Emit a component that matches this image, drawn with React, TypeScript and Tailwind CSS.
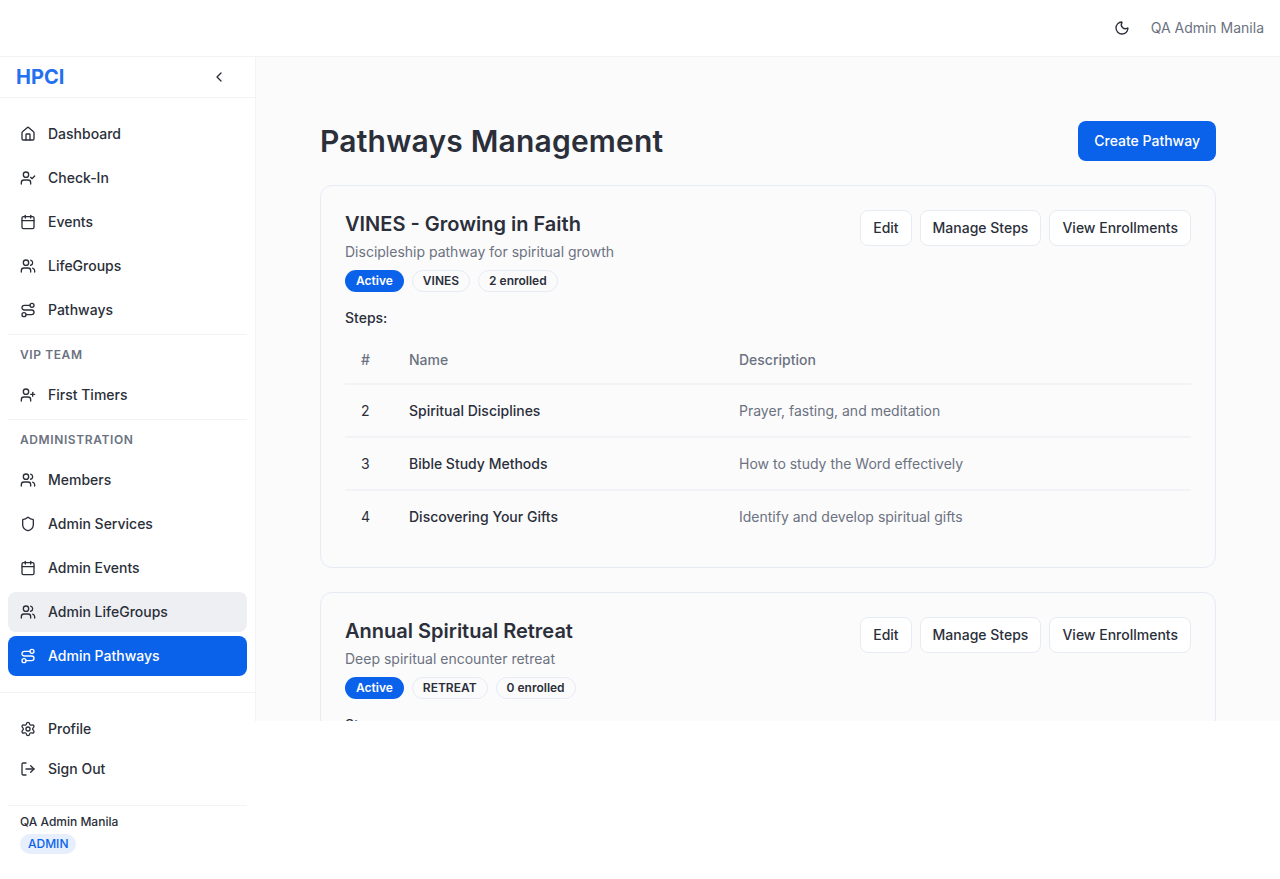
import React from 'react';
import { House, UserCheck, Calendar, Users, Route, UserPlus, Shield, Settings, LogOut, Moon, ChevronLeft } from 'lucide-react';

const font = { fontFamily: 'Inter, sans-serif' };

interface NavItemProps {
    icon: React.ElementType;
    label: string;
    state?: 'hover' | 'active';
}

const NavItem: React.FC<NavItemProps> = ({ icon: Icon, label, state }) => {
    let color = 'text-[#2b2f3a]';
    if (state === 'hover') color = 'bg-[#eeeff3] text-[#2b2f3a]';
    if (state === 'active') color = 'bg-[#0b62ea] text-white';
    return (
        <a className={`flex h-10 items-center gap-3 rounded-lg px-3 text-sm font-medium ${color}`}>
            <Icon className="h-4 w-4 shrink-0" strokeWidth={2} />
            <span>{label}</span>
        </a>
    );
};

const SectionLabel = ({ children }: { children: React.ReactNode }) => (
    <div className="flex h-[41px] items-center border-t border-[#f1f3f7] px-3 text-xs font-semibold tracking-wider text-[#6b7280]">
        {children}
    </div>
);

const OutlineButton = ({ children }: { children: React.ReactNode }) => (
    <button className="flex h-9 items-center rounded-lg border border-[#e6ebf4] bg-white px-3 text-sm font-medium text-[#2b2f3a]">
        {children}
    </button>
);

const Badge = ({ children, solid }: { children: React.ReactNode; solid?: boolean }) => (
    <span
        className={`flex h-[22px] items-center rounded-full border px-[10px] text-xs font-semibold ${
            solid ? 'border-transparent bg-[#0b62ea] text-white' : 'border-[#e6ebf4] text-[#2b2f3a]'
        }`}
    >
        {children}
    </span>
);

const steps = [
    { n: 2, name: 'Spiritual Disciplines', description: 'Prayer, fasting, and meditation' },
    { n: 3, name: 'Bible Study Methods', description: 'How to study the Word effectively' },
    { n: 4, name: 'Discovering Your Gifts', description: 'Identify and develop spiritual gifts' },
];

const CardHead = ({ title, description, tag, enrolled }: { title: string; description: string; tag: string; enrolled: string }) => (
    <div className="flex items-start justify-between">
        <div>
            <h2 className="text-xl leading-7 font-semibold text-[#2b2f3a]">{title}</h2>
            <p className="mt-1 text-sm leading-5 text-[#6b7280]">{description}</p>
            <div className="mt-2 flex gap-2">
                <Badge solid>Active</Badge>
                <Badge>{tag}</Badge>
                <Badge>{enrolled}</Badge>
            </div>
        </div>
        <div className="flex gap-2">
            <OutlineButton>Edit</OutlineButton>
            <OutlineButton>Manage Steps</OutlineButton>
            <OutlineButton>View Enrollments</OutlineButton>
        </div>
    </div>
);

export default function App() {
    return (
        <div className="min-h-screen bg-white" style={font}>
            <header className="flex h-[57px] items-center justify-end border-b border-[#f1f3f7] pr-4">
                <Moon className="h-4 w-4 text-[#2b2f3a]" strokeWidth={2} />
                <span className="ml-[21px] text-sm text-[#6b7280]">QA Admin Manila</span>
            </header>
            <div className="flex h-[664px] items-start">
                <aside className="h-[822px] w-[255px] shrink-0 bg-white">
                    <div className="flex h-[41px] items-center justify-between border-b border-[#f1f3f7] pr-7 pl-4">
                        <span className="text-xl font-bold text-[#2470ef]">HPCI</span>
                        <ChevronLeft className="h-4 w-4 text-[#2b2f3a]" strokeWidth={2} />
                    </div>
                    <nav className="px-2 pt-4">
                        <div className="flex flex-col gap-1">
                            <NavItem icon={House} label="Dashboard" />
                            <NavItem icon={UserCheck} label="Check-In" />
                            <NavItem icon={Calendar} label="Events" />
                            <NavItem icon={Users} label="LifeGroups" />
                            <NavItem icon={Route} label="Pathways" />
                        </div>
                        <div className="mt-1">
                            <SectionLabel>VIP TEAM</SectionLabel>
                            <NavItem icon={UserPlus} label="First Timers" />
                        </div>
                        <div className="mt-1">
                            <SectionLabel>ADMINISTRATION</SectionLabel>
                            <div className="flex flex-col gap-1">
                                <NavItem icon={Users} label="Members" />
                                <NavItem icon={Shield} label="Admin Services" />
                                <NavItem icon={Calendar} label="Admin Events" />
                                <NavItem icon={Users} label="Admin LifeGroups" state="hover" />
                                <NavItem icon={Route} label="Admin Pathways" state="active" />
                            </div>
                        </div>
                    </nav>
                    <div className="mt-4 border-t border-[#f1f3f7] px-2 pt-4">
                        <NavItem icon={Settings} label="Profile" />
                        <NavItem icon={LogOut} label="Sign Out" />
                        <div className="mt-4 border-t border-[#f1f3f7] px-3 pt-2">
                            <div className="text-xs leading-4 font-medium text-[#2b2f3a]">QA Admin Manila</div>
                            <span className="mt-1 inline-flex h-5 items-center rounded-full bg-[#e7effc] px-2 text-xs font-medium text-[#0b62ea]">ADMIN</span>
                        </div>
                    </div>
                </aside>
                <main className="h-[664px] min-w-0 flex-1 overflow-hidden border-l border-[#f1f3f7] bg-[#fbfbfc] pt-16 pr-16 pl-16">
                    <div className="flex h-10 items-center justify-between">
                        <h1 className="text-[30px] font-semibold tracking-[0.2px] text-[#2b2f3a]">Pathways Management</h1>
                        <button className="flex h-10 items-center rounded-lg bg-[#0b62ea] px-4 text-sm font-medium text-white">Create Pathway</button>
                    </div>
                    <section className="mt-6 rounded-xl border border-[#e6ebf4] p-6">
                        <CardHead title="VINES - Growing in Faith" description="Discipleship pathway for spiritual growth" tag="VINES" enrolled="2 enrolled" />
                        <div className="mt-4 text-sm leading-5 font-medium text-[#2b2f3a]">Steps:</div>
                        <table className="mt-2 w-full border-collapse text-sm">
                            <thead>
                                <tr className="h-12 border-b-2 border-[#f1f3f7] text-left text-[#6b7280]">
                                    <th className="w-16 px-4 font-medium">#</th>
                                    <th className="w-[330px] font-medium">Name</th>
                                    <th className="font-medium">Description</th>
                                </tr>
                            </thead>
                            <tbody>
                                {steps.map((step, i) => (
                                    <tr key={step.n} className={`h-[53px] ${i < steps.length - 1 ? 'border-b-2 border-[#f1f3f7]' : ''}`}>
                                        <td className="px-4 text-[#2b2f3a]">{step.n}</td>
                                        <td className="font-medium text-[#2b2f3a]">{step.name}</td>
                                        <td className="text-[#6b7280]">{step.description}</td>
                                    </tr>
                                ))}
                            </tbody>
                        </table>
                    </section>
                    <section className="mt-6 rounded-xl border border-[#e6ebf4] p-6">
                        <CardHead title="Annual Spiritual Retreat" description="Deep spiritual encounter retreat" tag="RETREAT" enrolled="0 enrolled" />
                        <div className="mt-4 text-sm leading-5 font-medium text-[#2b2f3a]">Steps:</div>
                    </section>
                </main>
            </div>
        </div>
    );
}
